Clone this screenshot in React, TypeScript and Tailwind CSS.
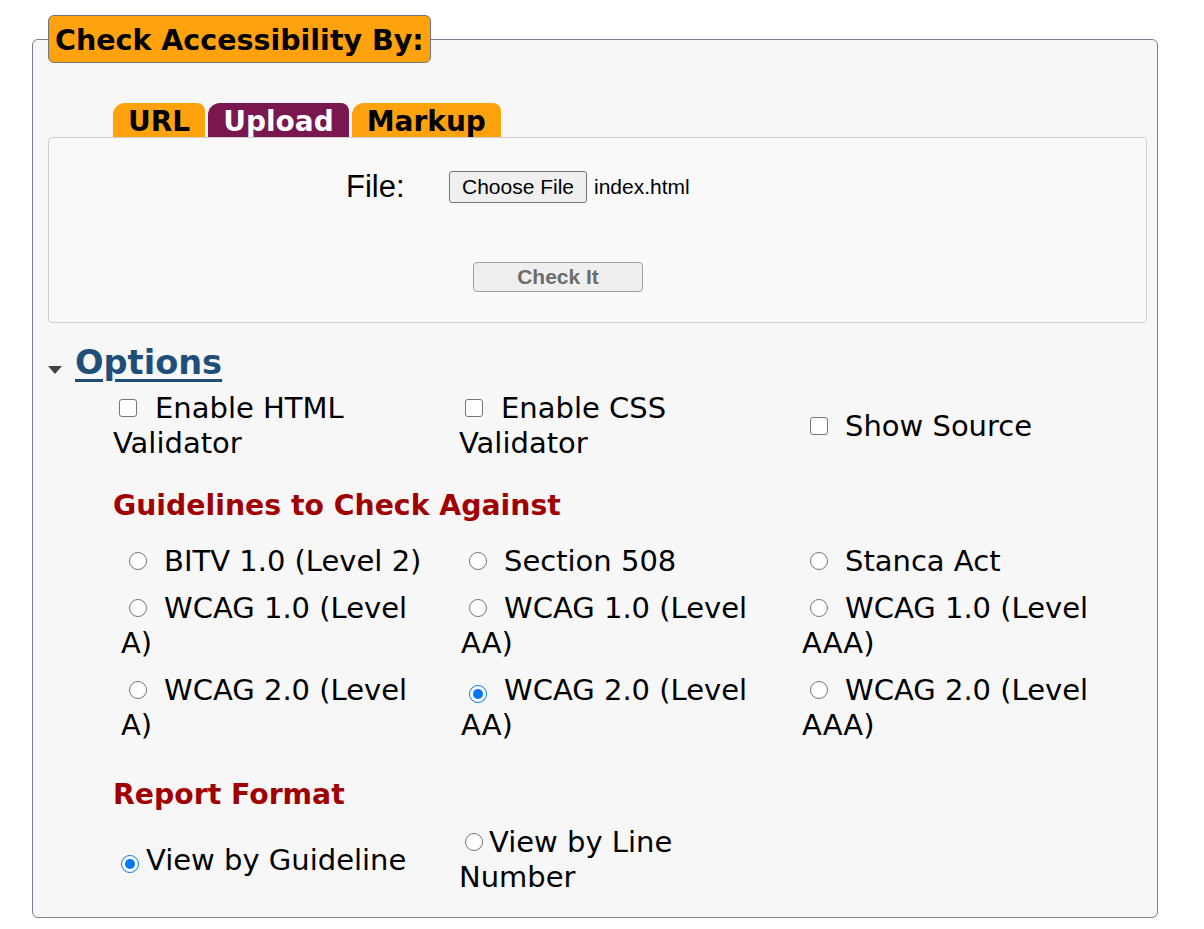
const guidelines = [
  { label: "BITV 1.0 (Level 2)", checked: false },
  { label: "Section 508", checked: false },
  { label: "Stanca Act", checked: false },
  { label: "WCAG 1.0 (Level", tail: "A)", checked: false },
  { label: "WCAG 1.0 (Level", tail: "AA)", checked: false },
  { label: "WCAG 1.0 (Level", tail: "AAA)", checked: false },
  { label: "WCAG 2.0 (Level", tail: "A)", checked: false },
  { label: "WCAG 2.0 (Level", tail: "AA)", checked: true },
  { label: "WCAG 2.0 (Level", tail: "AAA)", checked: false },
];

const tabs = [
  { name: "URL", active: false },
  { name: "Upload", active: true },
  { name: "Markup", active: false },
];

function Check() {
  return (
    <span className="inline-block h-[18px] w-[18px] rounded-[3px] border-[1.5px] border-[#767676] bg-white align-[1px]" />
  );
}

function Radio({ checked }: { checked?: boolean }) {
  if (checked) {
    return (
      <span className="inline-flex h-[18px] w-[18px] items-center justify-center rounded-full border-[1.5px] border-[#0075ff] bg-white align-[1px]">
        <span className="h-[10px] w-[10px] rounded-full bg-[#0075ff]" />
      </span>
    );
  }
  return (
    <span className="inline-block h-[18px] w-[18px] rounded-full border-[1.5px] border-[#767676] bg-white align-[1px]" />
  );
}

export default function App() {
  return (
    <div className="min-h-[929px] bg-white pt-[15px] font-['DejaVu_Sans',Verdana,sans-serif] text-[29px] leading-[35px] text-black">
      <fieldset className="ml-[32px] w-[1126px] rounded-[6px] border border-[#7b8190] bg-[#f7f7f7] pb-[22px] pl-[15px] pr-[10px]">
        <legend className="rounded-[6px] border border-[#6e7480] bg-[#ffa20e] px-[6px] pb-[4px] pt-[8px] text-[28.5px] font-bold leading-[34px]">
          Check Accessibility By:
        </legend>

        <div className="mt-[40px] flex gap-[3px] pl-[65px]">
          {tabs.map((t) => (
            <div
              key={t.name}
              className={
                "h-[34px] rounded-tl-[12px] rounded-tr-[8px] px-[15px] pt-[4px] text-[28px] font-bold leading-[30px] " +
                (t.active ? "bg-[#7a1650] text-white" : "bg-[#ffa20e] text-black")
              }
            >
              {t.name}
            </div>
          ))}
        </div>

        <div className="h-[186px] rounded-[4px] border border-[#cfcfcf] bg-[#f9f9f9] pt-[31px] font-['Liberation_Sans',Arial,sans-serif]">
          <div className="flex items-center">
            <span className="ml-[297px] w-[103px] text-[31px] leading-[32px]">File:</span>
            <button className="h-[32px] w-[138px] rounded-[3px] border border-[#767676] bg-[#efefef] text-[21px] leading-[30px]">
              Choose File
            </button>
            <span className="ml-[7px] text-[21px]">index.html</span>
          </div>
          <button className="ml-[424px] mt-[58px] h-[30px] w-[170px] rounded-[4px] border border-[#a0a0a0] bg-[#efefef] text-[21px] font-bold leading-[28px] text-[#6d6d6d]">
            Check It
          </button>
        </div>

        <div className="mt-[20px] flex items-center">
          <svg width="14" height="8" viewBox="0 0 14 8" className="mt-[14px]">
            <path d="M0 0h14L7 8z" fill="#444" />
          </svg>
          <a
            href="#"
            className="ml-[13px] text-[33.6px] font-bold leading-[40px] text-[#1f4e79] underline decoration-[3px] underline-offset-[5px]"
          >
            Options
          </a>
        </div>

        <div className="mt-[8px] ml-[65px] grid grid-cols-[346px_343px_1fr] items-center">
          <label>
            <span className="ml-[6px] mr-[18px]"><Check /></span>Enable HTML
            <br />
            Validator
          </label>
          <label>
            <span className="ml-[6px] mr-[18px]"><Check /></span>Enable CSS
            <br />
            Validator
          </label>
          <label>
            <span className="ml-[8px] mr-[17px]"><Check /></span>Show Source
          </label>
        </div>

        <h2 className="ml-[65px] mt-[27px] text-[28.3px] font-bold text-[#a00000]">Guidelines to Check Against</h2>

        <div className="ml-[73px] mt-[21px] grid grid-cols-[340px_341px_1fr] gap-y-[12px]">
          {guidelines.map((g, i) => (
            <label key={i}>
              <span className="ml-[8px] mr-[17px]"><Radio checked={g.checked} /></span>
              {g.label}
              {g.tail ? (
                <>
                  <br />
                  {g.tail}
                </>
              ) : null}
            </label>
          ))}
        </div>

        <h2 className="ml-[65px] mt-[34px] text-[28.3px] font-bold text-[#a00000]">Report Format</h2>

        <div className="ml-[65px] mt-[13px] grid grid-cols-[346px_260px] items-center">
          <label>
            <span className="ml-[8px] mr-[7px]"><Radio checked /></span>
            View by Guideline
          </label>
          <label>
            <span className="ml-[6px] mr-[6px]"><Radio /></span>
            View by Line
            <br />
            Number
          </label>
        </div>
      </fieldset>
    </div>
  );
}
